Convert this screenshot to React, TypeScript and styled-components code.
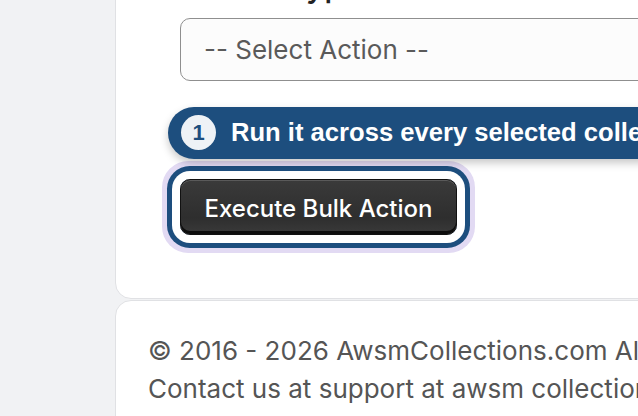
import React from "react";
import styled, { createGlobalStyle } from "styled-components";

const GlobalStyle = createGlobalStyle`
  html, body {
    margin: 0;
    padding: 0;
    background: #f1f2f4;
    overflow: hidden;
  }
  body {
    font-family: Inter, "Noto Sans", sans-serif;
    color: #333;
  }
`;

const Shell = styled.div`
  display: grid;
  grid-template-columns: 115px 1000px;
  margin-top: -98.5px;
`;

const Gutter = styled.aside`
  background: #f1f2f4;
`;

const Main = styled.main`
  display: flex;
  flex-direction: column;
  gap: 1px;
`;

const Card = styled.section`
  background: #fff;
  border: 1px solid #e0e1e4;
  border-radius: 0 0 0 16px;
  padding: 64px 64px 63px 64px;
  display: flex;
  flex-direction: column;
`;

const FieldLabel = styled.label`
  display: block;
  font-size: 32px;
  line-height: 38.4px;
  font-weight: 500;
  color: #222;
  margin-bottom: 13px;
`;

const ActionSelect = styled.select`
  appearance: none;
  height: 63px;
  width: 100%;
  box-sizing: border-box;
  border: 1px solid #8f8f8f;
  border-radius: 10px;
  background: #fcfcfc;
  padding: 0 23px;
  font-family: Inter, "Noto Sans", sans-serif;
  font-size: 26px;
  color: #5a5a5a;
`;

const ActionRow = styled.div`
  margin-top: 98px;
  display: flex;
`;

/* focus spotlight drawn around the active tour target */
const Spotlight = styled.span`
  position: relative;
  display: inline-flex;
  border-radius: 10px;
  box-shadow:
    0 0 0 8px #ffffff,
    0 0 0 13px #1d4e7e,
    0 0 0 18px #e2daf3;
`;

const TourPopover = styled.div`
  position: absolute;
  left: -12px;
  bottom: calc(100% + 20px);
  height: 52px;
  box-sizing: border-box;
  padding: 0 22px 0 13px;
  display: flex;
  align-items: center;
  gap: 15px;
  background: #1d4e7e;
  border-radius: 26px;
  white-space: nowrap;
  box-shadow: 0 4px 8px rgba(0, 0, 0, 0.22);
`;

const StepBadge = styled.span`
  width: 35px;
  height: 35px;
  border-radius: 50%;
  background: #eef2f6;
  color: #1d4e7e;
  display: flex;
  align-items: center;
  justify-content: center;
  font-family: "Liberation Sans", Arial, sans-serif;
  font-weight: 700;
  font-size: 22px;
`;

const StepText = styled.span`
  font-family: "Liberation Sans", Arial, sans-serif;
  font-weight: 700;
  font-size: 25.6px;
  color: #ffffff;
`;

const ExecuteButton = styled.button`
  height: 56px;
  width: 277px;
  box-sizing: border-box;
  border: 1px solid #111;
  border-radius: 10px;
  background: linear-gradient(#3a3a3a, #2e2e2e 70%, #3a3a3a);
  box-shadow:
    inset 0 1px 0 #5a5a5a,
    inset 0 -3px 0 #0d0d0d;
  color: #fff;
  font-family: Inter, "Noto Sans", sans-serif;
  font-size: 24px;
  font-weight: 500;
  padding: 3px 0 0;
  cursor: pointer;
`;

const Footer = styled.footer`
  background: #fff;
  border: 1px solid #e0e1e4;
  border-radius: 16px 0 0 0;
  padding: 31px 32px;
  font-size: 26px;
  line-height: 38.4px;
  color: #555;
`;

const FooterLine = styled.div`
  white-space: nowrap;
`;

export default function App() {
  return (
    <>
      <GlobalStyle />
      <Shell>
        <Gutter />
        <Main>
          <Card>
            <FieldLabel htmlFor="bulk-action">Action Type</FieldLabel>
            <ActionSelect id="bulk-action" defaultValue="">
              <option value="">-- Select Action --</option>
              <option value="tag">Add Tag</option>
              <option value="archive">Archive</option>
            </ActionSelect>
            <ActionRow>
              <Spotlight>
                <TourPopover role="tooltip">
                  <StepBadge>1</StepBadge>
                  <StepText>Run it across every selected collection</StepText>
                </TourPopover>
                <ExecuteButton type="button">Execute Bulk Action</ExecuteButton>
              </Spotlight>
            </ActionRow>
          </Card>
          <Footer>
            <FooterLine>© 2016 - 2026 AwsmCollections.com All Rights Reserved.</FooterLine>
            <FooterLine>Contact us at support at awsm collections dot com</FooterLine>
          </Footer>
        </Main>
      </Shell>
    </>
  );
}
